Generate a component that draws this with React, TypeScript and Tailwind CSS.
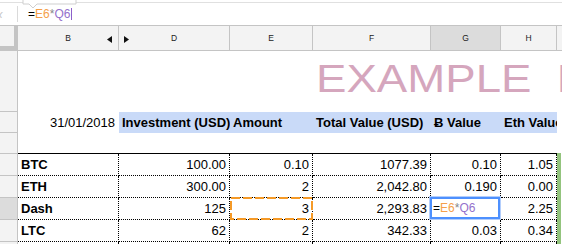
import React from "react";

const GRID = "grid grid-cols-[18px_101px_111px_83px_118px_70px_56px_4px_1px]";

type Coin = { name: string; invest: string; amount: string; total: string; btc: string; eth: string };

const coins: Coin[] = [
  { name: "BTC", invest: "100.00", amount: "0.10", total: "1077.39", btc: "0.10", eth: "1.05" },
  { name: "ETH", invest: "300.00", amount: "2", total: "2,042.80", btc: "0.190", eth: "0.00" },
  { name: "Dash", invest: "125", amount: "3", total: "2,293.83", btc: "", eth: "2.25" },
  { name: "LTC", invest: "62", amount: "2", total: "342.33", btc: "0.03", eth: "0.34" },
];

const colHead = "flex h-[25px] items-center justify-center border-r border-b border-[#c4c4c4] text-[8.5px] text-[#222]";
const rowHead = "border-r border-b border-[#c4c4c4]";
const numCell = "relative flex items-end justify-end pr-[3px] pb-[3px] border-r border-b border-dotted border-black";
const blueCell = "flex items-end overflow-hidden whitespace-nowrap bg-[#c9daf8] pl-[3px] pb-[3px] font-bold";

function Formula() {
  return (
    <>
      <span>=</span>
      <span className="text-[#f5a04a]">E6</span>
      <span className="text-[#888]">*</span>
      <span className="text-[#9471cc]">Q6</span>
    </>
  );
}

function Triangle({ dir }: { dir: "left" | "right" }) {
  return (
    <svg width="5" height="7" viewBox="0 0 5 7" className="absolute top-[10px]" style={dir === "left" ? { right: 6 } : { left: 5 }}>
      <path d={dir === "left" ? "M5 0 L0 3.5 L5 7 Z" : "M0 0 L5 3.5 L0 7 Z"} fill="#111" />
    </svg>
  );
}

export default function App() {
  return (
    <div className="relative h-[244px] w-[562px] overflow-hidden bg-white font-['Liberation_Sans',Arial,sans-serif] text-[13px] leading-[15px] text-black">
      {/* formula bar */}
      <div className="relative h-[26px] border-b border-[#c4c4c4]">
        <div className="h-[3px] border-b border-[#e0e0e0]" />
        <div className="flex h-[22px] items-center">
          <div className="flex h-[16px] w-[18px] items-center overflow-hidden border-r border-[#dadada]">
            <span className="-ml-[3px] text-[11px] italic text-[#c4c4c4]">x</span>
          </div>
          <div className="flex items-center pl-[10px] text-[12px]">
            <Formula />
            <span className="ml-px inline-block h-[12px] w-px bg-[#8e5fc9]" />
          </div>
        </div>
        <svg width="62" height="10" viewBox="0 0 62 10" className="absolute left-[20px] top-0">
          <path d="M3 -2 V4 H9 L13 8 L17 4 H56 V-2" fill="white" stroke="#cfcfcf" strokeWidth="1" />
        </svg>
      </div>

      <div className={GRID}>
        {/* column headers */}
        <div className="h-[25px] border-r-[4px] border-b-[5px] border-[#c4c4c4] bg-[#f3f3f3]" />
        <div className={`${colHead} relative bg-[#f3f3f3]`}>
          B
          <Triangle dir="left" />
        </div>
        <div className={`${colHead} relative bg-[#f3f3f3]`}>
          D
          <Triangle dir="right" />
        </div>
        <div className={`${colHead} bg-[#f3f3f3]`}>E</div>
        <div className={`${colHead} bg-[#f3f3f3]`}>F</div>
        <div className={`${colHead} bg-[#dcdcdc]`}>G</div>
        <div className={`${colHead} bg-[#f3f3f3]`}>H</div>
        <div className="col-span-2 h-[25px] border-b border-[#c4c4c4] bg-[#f3f3f3]" />

        {/* title row */}
        <div className={`${rowHead} h-[61px] bg-[#f3f3f3]`} />
        <div className="col-span-3" />
        <div className="col-span-5 overflow-hidden whitespace-nowrap pl-[3px] pt-[9px]">
          <span className="inline-block origin-left scale-x-[1.2] text-[38px] leading-[38px] text-[#d5a6bd]">EXAMPLE&nbsp;&nbsp;DASHBOARD</span>
        </div>

        {/* header row */}
        <div className={`${rowHead} h-[21px] bg-[#f3f3f3]`} />
        <div className="flex items-end justify-end pr-[4px] pb-[3px]">31/01/2018</div>
        <div className={blueCell}>Investment (USD)</div>
        <div className={blueCell}>Amount</div>
        <div className={blueCell}>Total Value (USD)</div>
        <div className={blueCell}>Ƀ Value</div>
        <div className={blueCell}>Eth Value</div>
        <div className="col-span-2" />

        {/* spacer row above table */}
        <div className={`${rowHead} h-[21px] bg-[#f3f3f3]`} />
        <div className="col-span-6 border-b border-black" />
        <div className="border-b border-[#93c47d]" />
        <div />

        {/* data rows */}
        {coins.map((c) => {
          const selected = c.name === "Dash";
          return (
            <React.Fragment key={c.name}>
              <div className={`${rowHead} h-[22px] ${selected ? "bg-[#dcdcdc]" : "bg-[#f3f3f3]"}`} />
              <div className="flex items-end pl-[3px] pb-[3px] font-bold border-r border-b border-dotted border-black">{c.name}</div>
              <div className={numCell}>{c.invest}</div>
              <div className={numCell}>
                {c.amount}
                {selected && (
                  <svg className="absolute inset-x-0 -top-px bottom-0 h-[23px] w-[83px]" viewBox="0 0 83 23">
                    <rect x="1" y="1" width="81" height="21" fill="none" stroke="#f59a27" strokeWidth="2" strokeDasharray="9 3" />
                  </svg>
                )}
              </div>
              <div className={numCell}>{c.total}</div>
              <div className={numCell}>
                {c.btc}
                {selected && (
                  <div className="absolute -left-px -top-px bottom-0 right-0 flex items-end border-2 border-[#4d90fe] bg-white pb-[1px] pl-[1px] shadow-[0_0_0_1px_#b3cefc] text-[12px]">
                    <Formula />
                  </div>
                )}
              </div>
              <div className={numCell}>{c.eth}</div>
              <div className="bg-[#93c47d]" />
              <div />
            </React.Fragment>
          );
        })}

        {/* next row, cut off */}
        <div className="h-[10px] border-r border-[#c4c4c4] bg-[#f3f3f3]" />
        <div className="border-r border-dotted border-black" />
        <div className="border-r border-dotted border-black" />
        <div className="border-r border-dotted border-black" />
        <div className="border-r border-dotted border-black" />
        <div className="border-r border-dotted border-black" />
        <div className="border-r border-dotted border-black" />
        <div className="bg-[#93c47d]" />
        <div />
      </div>
    </div>
  );
}
